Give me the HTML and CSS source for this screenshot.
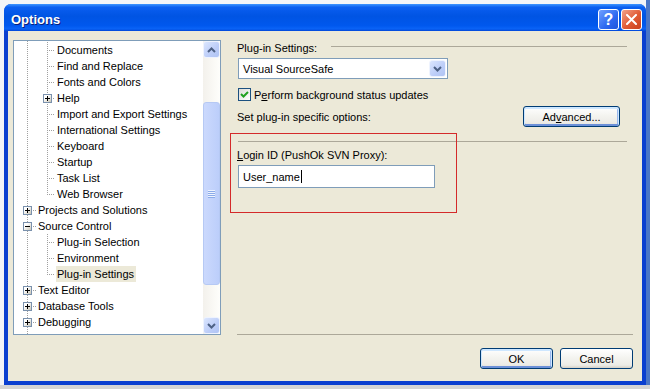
FILE: index.html
```html
<!DOCTYPE html>
<html lang="en">
<head>
    <meta charset="UTF-8">
    <meta name="viewport" content="width=device-width, initial-scale=1.0">
    <title>Options</title>
    <link rel="stylesheet" href="styles.css">
</head>
<body>
    <div class="window">
        <div class="titlebar">
            <span class="caption">Options</span>
            <span class="cap-btn help">?</span>
            <span class="cap-btn close">
                <svg width="11" height="11" viewBox="0 0 11 11"><path d="M1 1 L10 10 M10 1 L1 10" stroke="#fff" stroke-width="2" stroke-linecap="round"/></svg>
            </span>
        </div>
        <div class="client">
            <div class="main">
                <div class="tree">
                    <div class="nodes">
                        <div class="node child"><span class="label">Documents</span></div>
                        <div class="node child"><span class="label">Find and Replace</span></div>
                        <div class="node child"><span class="label">Fonts and Colors</span></div>
                        <div class="node child"><span class="tog plus"></span><span class="label">Help</span></div>
                        <div class="node child"><span class="label">Import and Export Settings</span></div>
                        <div class="node child"><span class="label">International Settings</span></div>
                        <div class="node child"><span class="label">Keyboard</span></div>
                        <div class="node child"><span class="label">Startup</span></div>
                        <div class="node child"><span class="label">Task List</span></div>
                        <div class="node child last"><span class="label">Web Browser</span></div>
                        <div class="node top"><span class="tog plus"></span><span class="label">Projects and Solutions</span></div>
                        <div class="node top"><span class="tog"></span><span class="label">Source Control</span></div>
                        <div class="node child"><span class="label">Plug-in Selection</span></div>
                        <div class="node child"><span class="label">Environment</span></div>
                        <div class="node child last"><span class="label selected">Plug-in Settings</span></div>
                        <div class="node top"><span class="tog plus"></span><span class="label">Text Editor</span></div>
                        <div class="node top"><span class="tog plus"></span><span class="label">Database Tools</span></div>
                        <div class="node top"><span class="tog plus"></span><span class="label">Debugging</span></div>
                    </div>
                    <div class="scrollbar">
                        <span class="sb-btn">
                            <svg width="9" height="6" viewBox="0 0 9 6"><path d="M1 5 L4.5 1.5 L8 5" fill="none" stroke="#4d6185" stroke-width="2"/></svg>
                        </span>
                        <span class="thumb"><span class="grip"></span></span>
                        <span class="sb-btn down">
                            <svg width="9" height="6" viewBox="0 0 9 6"><path d="M1 1 L4.5 4.5 L8 1" fill="none" stroke="#4d6185" stroke-width="2"/></svg>
                        </span>
                    </div>
                </div>
                <div class="settings">
                    <div class="group-head">
                        <span>Plug-in Settings:</span>
                        <span class="rule"></span>
                    </div>
                    <div class="combo">
                        <span class="combo-text">Visual SourceSafe</span>
                        <span class="sb-btn drop">
                            <svg width="9" height="6" viewBox="0 0 9 6"><path d="M1 1 L4.5 4.5 L8 1" fill="none" stroke="#4d6185" stroke-width="2"/></svg>
                        </span>
                    </div>
                    <div class="check">
                        <span class="box">
                            <svg width="11" height="11" viewBox="0 0 11 11"><path d="M2 5 L4.5 7.5 L9 3" fill="none" stroke="#21a121" stroke-width="2"/></svg>
                        </span>
                        <span>P<u>e</u>rform background status updates</span>
                    </div>
                    <div class="options-row">
                        <span>Set plug-in specific options:</span>
                        <button class="btn default adv">Ad<u>v</u>anced...</button>
                    </div>
                    <div class="sep"></div>
                    <div class="field-label"><u>L</u>ogin ID (PushOk SVN Proxy):</div>
                    <div class="textbox">User_name<span class="caret"></span></div>
                    <div class="sep bottom"></div>
                    <div class="marker"></div>
                </div>
            </div>
            <div class="footer">
                <button class="btn default">OK</button>
                <button class="btn">Cancel</button>
            </div>
        </div>
    </div>
</body>
</html>
```

FILE: styles.css
```css
html, body {
    margin: 0;
    height: 100%;
}
body {
    padding: 4px 0 0 4px;
    box-sizing: border-box;
    font-family: "Liberation Sans", Arial, sans-serif;
    font-size: 11px;
    color: #000;
    background:
        linear-gradient(to bottom, transparent 385px, #d4d4d4 385px),
        linear-gradient(to right, #f2f4f8 0, #f2f4f8 646px, #4a76c6 646px);
}
.window {
    width: 642px;
    height: 381px;
    display: flex;
    flex-direction: column;
    border-radius: 7px 7px 0 0;
    background: #0a3fd0;
    overflow: hidden;
}
.titlebar {
    height: 27px;
    box-sizing: border-box;
    padding: 4px 4px 0 7px;
    display: flex;
    align-items: center;
    gap: 2px;
    background: linear-gradient(#3d95ff 0, #0a5ef0 12%, #0054e3 45%, #0058ee 80%, #0a63f6 92%, #0047d8 100%);
}
.caption {
    flex: 1;
    color: #fff;
    font-weight: bold;
    font-size: 13px;
    text-shadow: 1px 1px 0 #0a1e78;
}
.cap-btn {
    width: 21px;
    height: 21px;
    box-sizing: border-box;
    border: 1px solid #fff;
    border-radius: 3px;
    display: flex;
    justify-content: center;
    align-items: center;
    color: #fff;
}
.help {
    background: linear-gradient(135deg, #6fa0ff, #2d68f0 60%, #1e55dc);
    font-weight: bold;
    font-size: 16px;
}
.close {
    background: linear-gradient(135deg, #f3a28a, #e05a34 55%, #c8421f);
}
.client {
    flex: 1;
    margin: 0 4px 4px;
    padding: 9px 9px 0 5px;
    background: #ece9d8;
    display: flex;
    flex-direction: column;
}
.main {
    height: 295px;
    display: flex;
    gap: 16px;
}

/* tree view */
.tree {
    width: 208px;
    box-sizing: border-box;
    border: 1px solid #7f9db9;
    background: #fff;
    display: flex;
}
.nodes {
    flex: 1;
    padding-top: 1px;
    overflow: hidden;
    background: linear-gradient(#a0a0a0 50%, transparent 50%) 13px 0 / 1px 2px repeat-y;
}
.node {
    position: relative;
    height: 16px;
    line-height: 16px;
    white-space: nowrap;
}
.node.child {
    padding-left: 42px;
}
.node.top {
    padding-left: 23px;
}
.node::before,
.node::after {
    content: '';
    position: absolute;
}
.node.child::before {
    left: 33px;
    top: 0;
    bottom: 0;
    width: 1px;
    background: linear-gradient(#a0a0a0 50%, transparent 50%) 0 0 / 1px 2px;
}
.node.child.last::before {
    bottom: auto;
    height: 9px;
}
.node.child::after {
    left: 34px;
    top: 8px;
    width: 7px;
    height: 1px;
    background: linear-gradient(to right, transparent 50%, #a0a0a0 50%) 0 0 / 2px 1px;
}
.node.top::after {
    left: 14px;
    top: 8px;
    width: 8px;
    height: 1px;
    background: linear-gradient(to right, transparent 50%, #a0a0a0 50%) 0 0 / 2px 1px;
}
.tog {
    position: absolute;
    z-index: 1;
    top: 4px;
    left: 9px;
    width: 9px;
    height: 9px;
    box-sizing: border-box;
    border: 1px solid #7a91ad;
    background: linear-gradient(135deg, #fff 30%, #c9c5b5);
}
.node.child .tog {
    left: 29px;
}
.tog::before,
.tog::after {
    content: '';
    position: absolute;
    background: #000;
}
.tog::before {
    left: 1px;
    top: 3px;
    width: 5px;
    height: 1px;
}
.tog.plus::after {
    left: 3px;
    top: 1px;
    width: 1px;
    height: 5px;
}
.label {
    display: inline-block;
    padding: 0 2px 0 1px;
    height: 16px;
}
.label.selected {
    background: #ece9d8;
}

/* scrollbars */
.scrollbar {
    width: 17px;
    display: flex;
    flex-direction: column;
    background: linear-gradient(to right, #f3f1ec, #fefefb);
}
.sb-btn {
    height: 17px;
    box-sizing: border-box;
    border: 1px solid #eef3fe;
    border-radius: 3px;
    background: linear-gradient(135deg, #dbe6fe, #bccdf8 60%, #b0c4f4);
    display: flex;
    justify-content: center;
    align-items: center;
}
.sb-btn.down {
    margin-top: auto;
}
.thumb {
    margin-top: 44px;
    height: 183px;
    box-sizing: border-box;
    border: 1px solid #b6c9f4;
    border-radius: 3px;
    background: linear-gradient(to right, #cbd9fd, #bccefa);
    display: flex;
    justify-content: center;
    align-items: center;
}
.grip {
    width: 7px;
    height: 8px;
    background: repeating-linear-gradient(#eef3fe 0 1px, #8cabe9 1px 2px);
}

/* settings panel */
.settings {
    flex: 1;
    position: relative;
    display: flex;
    flex-direction: column;
}
.group-head {
    margin-top: 1px;
    height: 14px;
    line-height: 14px;
    display: flex;
}
.rule {
    flex: 1;
    height: 1px;
    margin: 5px 6px 0 14px;
    background: #aca899;
}
.combo {
    margin: 3px 0 0 1px;
    width: 210px;
    height: 21px;
    box-sizing: border-box;
    border: 1px solid #7f9db9;
    background: #fff;
    display: flex;
    align-items: center;
    padding: 1px;
}
.combo-text {
    flex: 1;
    padding-left: 3px;
}
.sb-btn.drop {
    width: 17px;
    height: 17px;
}
.check {
    margin: 9px 0 0 1px;
    height: 13px;
    display: flex;
    align-items: center;
    gap: 3px;
}
.check .box {
    width: 13px;
    height: 13px;
    box-sizing: border-box;
    border: 1px solid #1c5180;
    background: linear-gradient(135deg, #dcdcd7, #fff);
    display: flex;
    justify-content: center;
    align-items: center;
}
.options-row {
    margin-top: 5px;
    display: flex;
    align-items: center;
    justify-content: space-between;
    padding-right: 13px;
}
.btn {
    width: 73px;
    height: 21px;
    padding: 0;
    font-family: inherit;
    font-size: 11px;
    color: #000;
    border: 1px solid #003c74;
    border-radius: 3px;
    background: linear-gradient(#fff, #f4f4f0 45%, #ecebe6 85%, #d6d0c5);
}
.btn.default {
    box-shadow: inset 0 1px 0 1px #cee7ff, inset 0 -2px 0 0 #6c90d8, inset -1px 0 0 1px #9ab8ee;
}
.btn.adv {
    width: 97px;
}
.sep {
    margin: 14px 6px 0 1px;
    height: 1px;
    background: #aca899;
}
.field-label {
    margin-top: 6px;
    line-height: 14px;
}
.textbox {
    margin: 3px 0 0 1px;
    width: 197px;
    height: 23px;
    box-sizing: border-box;
    border: 1px solid #7f9db9;
    background: #fff;
    padding-left: 4px;
    display: flex;
    align-items: center;
}
.caret {
    width: 1px;
    height: 13px;
    margin-left: 1px;
    background: #000;
}
.sep.bottom {
    margin: auto 0 0;
}
.marker {
    position: absolute;
    left: -7px;
    top: 93px;
    width: 227px;
    height: 80px;
    box-sizing: border-box;
    border: 1px solid #d42a2a;
}
.footer {
    margin-top: 13px;
    display: flex;
    justify-content: flex-end;
    gap: 7px;
}
```
